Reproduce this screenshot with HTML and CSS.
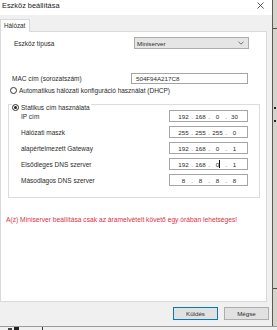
FILE: index.html
```html
<!DOCTYPE html>
<html>
<head>
    <meta charset="UTF-8">
    <title>Eszköz beállítása</title>
    <link rel="stylesheet" href="styles.css">
</head>
<body>
    <div class="screen">
        <div class="dialog">
            <div class="titlebar">
                <span class="title">Eszköz beállítása</span>
                <svg class="close" width="7" height="7" viewBox="0 0 7 7">
                    <path d="M0.5 0.5 L6.5 6.5 M6.5 0.5 L0.5 6.5" stroke="#333" stroke-width="0.8"/>
                </svg>
            </div>
            <div class="tabs">
                <div class="tab">Hálózat</div>
            </div>
            <div class="panel">
                <div class="row row-type">
                    <span class="label label-type">Eszköz típusa</span>
                    <div class="select">
                        <span>Miniserver</span>
                        <svg width="6" height="4" viewBox="0 0 6 4">
                            <path d="M0.5 0.8 L3 3.2 L5.5 0.8" fill="none" stroke="#555" stroke-width="0.8"/>
                        </svg>
                    </div>
                </div>
                <div class="row row-mac">
                    <span class="label label-mac">MAC cím (sorozatszám)</span>
                    <div class="field field-mac">504F94A217C8</div>
                </div>
                <div class="radio-line radio-dhcp">
                    <span class="radio"></span>
                    <span>Automatikus hálózati konfiguráció használat (DHCP)</span>
                </div>
                <div class="group">
                    <div class="radio-line legend">
                        <span class="radio checked"></span>
                        <span>Statikus cím használata</span>
                    </div>
                    <div class="ip-row first">
                        <span class="label">IP cím</span>
                        <div class="ip"><span>192</span><i>.</i><span>168</span><i>.</i><span>0</span><i>.</i><span>30</span></div>
                    </div>
                    <div class="ip-row">
                        <span class="label">Hálózati maszk</span>
                        <div class="ip"><span>255</span><i>.</i><span>255</span><i>.</i><span>255</span><i>.</i><span>0</span></div>
                    </div>
                    <div class="ip-row">
                        <span class="label">alapértelmezett Gateway</span>
                        <div class="ip"><span>192</span><i>.</i><span>168</span><i>.</i><span>0</span><i>.</i><span>1</span></div>
                    </div>
                    <div class="ip-row">
                        <span class="label">Elsődleges DNS szerver</span>
                        <div class="ip"><span>192</span><i>.</i><span>168</span><i>.</i><span class="caret">0</span><i>.</i><span>1</span></div>
                    </div>
                    <div class="ip-row">
                        <span class="label">Másodlagos DNS szerver</span>
                        <div class="ip"><span>8</span><i>.</i><span>8</span><i>.</i><span>8</span><i>.</i><span>8</span></div>
                    </div>
                </div>
                <p class="warning">A(z) Miniserver beállítása csak az áramelvételt követő egy órában lehetséges!</p>
            </div>
            <div class="buttons">
                <div class="button default">Küldés</div>
                <div class="button">Mégse</div>
            </div>
        </div>
        <div class="behind">
            <span class="line line-top"></span>
            <span class="mark mark-a"></span>
            <span class="mark mark-b"></span>
            <span class="line line-bottom"></span>
        </div>
    </div>
    <div class="taskbar">
        <svg class="glyph" width="12" height="4" viewBox="0 0 12 4">
            <rect x="0" y="1" width="4" height="3" fill="#444"/>
            <rect x="6" y="0" width="5" height="4" fill="#222"/>
        </svg>
        <span class="sep"></span>
    </div>
</body>
</html>
```

FILE: styles.css
```css
/* Alap */
body {
  margin: 0;
  width: 277px;
  height: 330px;
  overflow: hidden;
  background: #d6d3cc;
  font-family: "Liberation Sans", Arial, sans-serif;
  font-size: 6.5px;
  color: #2b2b2b;
}

.screen {
  display: flex;
  height: 326px;
}

/* Ablak */
.dialog {
  width: 272px;
  background: #f0f0f0;
  display: flex;
  flex-direction: column;
  border-right: 1px solid #5a5a5a;
}

.titlebar {
  height: 15px;
  background: #fff;
  display: flex;
  align-items: center;
  justify-content: space-between;
  padding: 0 8px 4px 2px;
  box-sizing: border-box;
}

.title {
  font-size: 7.4px;
  color: #222;
}

.tabs {
  height: 16px;
  display: flex;
  align-items: flex-end;
}

.tab {
  height: 13px;
  width: 30px;
  box-sizing: border-box;
  background: #fff;
  border: 1px solid #d9d9d9;
  border-bottom: none;
  padding: 2px 0 0 3px;
  font-size: 6.3px;
  position: relative;
  top: 1px;
}

/* Tartalom */
.panel {
  height: 271px;
  width: 267px;
  box-sizing: border-box;
  background: #fff;
  border: 1px solid #d9d9d9;
  display: flex;
  flex-direction: column;
}

.row {
  display: flex;
  align-items: center;
}

.row-type {
  margin-top: 5px;
}

.label-type {
  width: 120px;
  padding-left: 13px;
}

.select {
  width: 115px;
  height: 12px;
  box-sizing: border-box;
  background: #e5e5e5;
  border: 1px solid #adadad;
  display: flex;
  align-items: center;
  justify-content: space-between;
  padding: 0 4px 0 2px;
  font-size: 6.2px;
}

.row-mac {
  margin-top: 24px;
}

.label-mac {
  width: 119px;
  padding-left: 11px;
}

.field {
  height: 11px;
  box-sizing: border-box;
  border: 1px solid #a5a5a5;
  display: flex;
  align-items: center;
  padding-left: 4px;
  font-size: 6.2px;
}

.field-mac {
  width: 117px;
}

.radio-line {
  display: flex;
  align-items: center;
  gap: 2px;
}

.radio-dhcp {
  margin-top: 3px;
  padding-left: 9px;
}

.radio {
  width: 7px;
  height: 7px;
  box-sizing: border-box;
  border: 1px solid #333;
  border-radius: 50%;
  background: #fff;
  display: flex;
  align-items: center;
  justify-content: center;
}

.radio.checked::after {
  content: "";
  width: 3px;
  height: 3px;
  border-radius: 50%;
  background: #222;
}

/* Statikus csoport */
.group {
  margin: 10px 0 0 7px;
  width: 252px;
  height: 94px;
  box-sizing: border-box;
  border: 1px solid #dcdcdc;
  position: relative;
}

.legend {
  position: absolute;
  left: 3px;
  top: -1px;
  background: #fff;
  padding-right: 1px;
}

.ip-row {
  display: flex;
  align-items: center;
  margin-top: 4px;
}

.ip-row.first {
  margin-top: 5px;
}

.ip-row .label {
  width: 148px;
  padding-left: 12px;
}

.ip {
  width: 79px;
  height: 12px;
  box-sizing: border-box;
  border: 1px solid #a5a5a5;
  display: flex;
  align-items: center;
  padding: 0 5px 0 8px;
  font-size: 6.2px;
}

.ip span {
  width: 11px;
  text-align: center;
}

.ip i {
  font-style: normal;
  width: 6px;
  text-align: center;
}

.caret {
  position: relative;
}

.caret::after {
  content: "";
  position: absolute;
  left: 7px;
  top: -1px;
  width: 0.8px;
  height: 8px;
  background: #111;
}

.warning {
  margin: 18px 0 0 5px;
  color: #e2313f;
  font-size: 6.7px;
}

/* Gombok */
.buttons {
  display: flex;
  justify-content: flex-end;
  gap: 6px;
  padding: 5px 3px 0 0;
}

.button {
  width: 45px;
  height: 13px;
  box-sizing: border-box;
  background: #e1e1e1;
  border: 1px solid #adadad;
  display: flex;
  align-items: center;
  justify-content: center;
  font-size: 6.2px;
}

.button.default {
  border-color: #0078d7;
}

/* Háttér ablak */
.behind {
  flex: 1;
  position: relative;
}

.line {
  position: absolute;
  left: 0;
  right: 0;
  height: 1px;
  background: #4a4a4a;
}

.line-top {
  top: 28px;
}

.line-bottom {
  top: 288px;
}

.mark {
  position: absolute;
  left: 1px;
  width: 2px;
  height: 2px;
  background: #222;
}

.mark-a {
  top: 107px;
}

.mark-b {
  top: 120px;
}

.taskbar {
  height: 4px;
  background: #f0f0f0;
  border-top: 1px solid #9a9a9a;
  display: flex;
  align-items: flex-start;
  overflow: hidden;
}

.glyph {
  margin-left: 8px;
}

.sep {
  margin-left: 22px;
  width: 1px;
  height: 4px;
  background: #333;
}
```
